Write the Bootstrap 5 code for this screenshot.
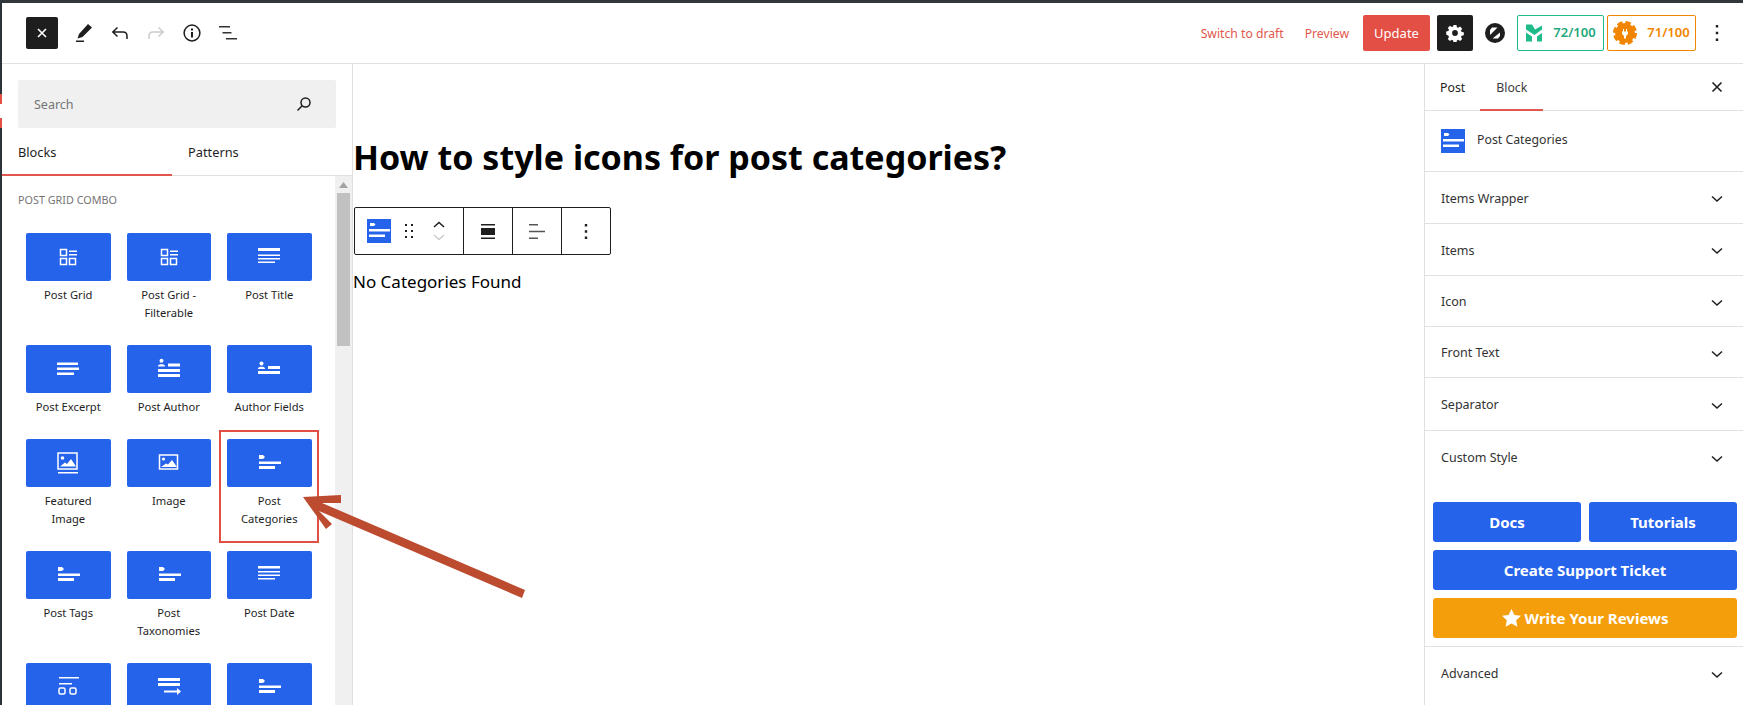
<!DOCTYPE html>
<html lang="en">
<head>
    <meta charset="UTF-8">
    <meta name="viewport" content="width=device-width, initial-scale=1.0">
    <title>Edit Post</title>
    <link href="https://cdn.jsdelivr.net/npm/bootstrap@5.3.0/dist/css/bootstrap.min.css" rel="stylesheet">
    <style>
        html, body { height: 100%; }
        body {
            overflow: hidden;
            background: #fff;
            color: #1e1e1e;
            font-family: "Noto Sans", "Open Sans", sans-serif;
            font-size: 12.5px;
        }
        .ed-frame { height: 705px; position: relative; overflow: hidden; }
        .ed-strip { height: 3px; background: #32373c; }
        .ed-wrap { height: 702px; }
        .ed-rail { width: 2px; background: #2c3338; flex: none; padding-top: 91px; }
        .ed-rail i { display: block; height: 34px; background: linear-gradient(#e34f45 0 10px, #fff 10px 24px, #e34f45 24px); }
        .ed-app { min-width: 0; }

        .ed-top { height: 61px; border-bottom: 1px solid #e0e0e0; padding-left: 24px; }
        .ed-close { width: 32px; height: 32px; background: #1e1e1e; border-radius: 2px; margin-right: 8px; }
        .ed-tool { width: 36px; height: 36px; }
        .ed-link { color: #e2574c; font-size: 12.2px; padding-top: 2px; }
        .ed-draft { margin-right: 21px; }
        .ed-update { width: 67px; height: 36px; background: #e34f45; color: #fff; border-radius: 2px; font-size: 13px; margin-left: 14px; padding-top: 2px; }
        .ed-gear { width: 36px; height: 36px; background: #1e1e1e; border-radius: 2px; margin-left: 7px; margin-right: 12px; }
        .ed-score { height: 36px; border-radius: 2px; font-weight: 600; font-size: 13px; gap: 10px; }
        .ed-score-g { width: 87px; border: 1px solid #1fbb8a; color: #1fa87d; margin-left: 12px; }
        .ed-score-o { width: 89px; border: 1px solid #f18500; color: #f18500; margin-left: 3px; }
        .ed-more { margin: 0 24px 0 19px; }

        .ed-left { width: 351px; flex: none; border-right: 1px solid #e0e0e0; }
        .ed-search { margin: 16px 16px 0; width: 318px; height: 48px; background: #f0f0f0; border-radius: 2px; padding: 3px 16px 0; color: #757575; }
        .ed-search svg { margin-top: -3px; }
        .ed-tabs { height: 48px; border-bottom: 1px solid #e0e0e0; }
        .ed-tab { width: 170px; padding-left: 16px; height: 48px; line-height: 49px; color: #1e1e1e; font-size: 12.8px; }
        .ed-tab-on { box-shadow: inset 0 -2px 0 #e2574c; }
        .ed-list { min-height: 0; overflow: hidden; }
        .ed-scroll { width: 17px; background: #f0f0f0; flex: none; }
        .ed-scroll-up { height: 17px; }
        .ed-thumb { width: 13px; height: 153px; margin: 0 auto; background: #c1c1c1; }
        .ed-cat { font-size: 10.8px; color: #757575; text-transform: uppercase; padding: 16px 0 0 16px; height: 57px; line-height: 16px; }
        .ed-blocks { display: grid; grid-template-columns: repeat(3, 100.5px); padding-left: 16px; }
        .ed-block { padding: 0 8px 23px; text-align: center; font-size: 11.2px; line-height: 18px; color: #1e1e1e; }
        .ed-icon { height: 48px; background: #2563eb; border-radius: 2px; margin-bottom: 5px; }

        .ed-main { min-width: 0; position: relative; }
        .ed-title { font-size: 34px; font-weight: 700; line-height: 1.3; margin: 0; padding: 71px 0 0; color: #000; font-family: "Noto Sans", sans-serif; }
        .ed-bar { width: 257px; height: 48px; border: 1px solid #1e1e1e; border-radius: 2px; margin: 28px 0 0 1px; background: #fff; }
        .ed-bar > div { height: 46px; border-right: 1px solid #1e1e1e; }
        .ed-bar > div:last-child { border-right: 0; }
        .ed-bar-first { width: 109px; padding-left: 12px; }
        .ed-bar-cell { width: 49px; }
        .ed-drag { margin-left: 14px; }
        .ed-move { margin-left: 20px; }
        .ed-none { font-size: 17px; line-height: 27px; margin: 13px 0 0; color: #000; }

        .ed-right { width: 319px; flex: none; border-left: 1px solid #e0e0e0; }
        .ed-rtabs { height: 47px; border-bottom: 1px solid #e0e0e0; padding-right: 20px; }
        .ed-rtab { height: 47px; line-height: 48px; padding: 0 15px; color: #1e1e1e; font-size: 12.3px; }
        .ed-rtab-on { color: #3c3c3c; box-shadow: inset 0 -2px 0 #e2574c; padding: 0 16px; }
        .ed-head { height: 61px; border-bottom: 1px solid #e0e0e0; padding-left: 16px; gap: 12px; color: #333; font-size: 12.3px; }
        .ed-head span { margin-top: -2px; }
        .ed-sec { border-bottom: 1px solid #e0e0e0; padding: 3px 18px 0 16px; color: #333; }
        .ed-cta { padding: 19px 6px 8px 8px; border-bottom: 1px solid #e0e0e0; }
        .ed-cta a { display: flex; align-items: center; justify-content: center; height: 40px; border-radius: 3px; background: #2563eb; color: #fff; font-weight: 700; font-size: 15px; text-decoration: none; gap: 4px; }
        .ed-cta a.ed-star { background: #f59e0b; }

        .ed-over { position: absolute; left: 0; top: 0; pointer-events: none; }
    </style>
</head>
<body>

<svg width="0" height="0" class="position-absolute">
    <defs>
        <symbol id="i-grid" viewBox="0 0 24 24"><g fill="none" stroke="#fff" stroke-width="1.5"><rect x="4.5" y="4.5" width="6" height="6"/><rect x="4.5" y="13.5" width="6" height="6"/><rect x="13.5" y="13.5" width="6" height="6"/></g><path d="M13 5.5h8v1.5h-8zM13 9h8v1.5h-8z" fill="#fff"/></symbol>
        <symbol id="i-title" viewBox="0 0 24 24"><path d="M1 3h22v3H1zM1 9.500h22v1.500H1zM1 13h22v1.500H1zM1 16.500h17V18H1z" fill="#fff"/></symbol>
        <symbol id="i-excerpt" viewBox="0 0 24 24"><path d="M1 5.500h21V8H1zM1 10.500h22V13H1zM1 15.500h17V18H1z" fill="#fff"/></symbol>
        <symbol id="i-author" viewBox="0 0 24 24"><circle cx="4.500" cy="3.800" r="2" fill="#fff"/><path d="M1 9c0-2.500 7-2.500 7 0v.5H1zM11 6.500h12V9.500H11zM1 12h22v3H1zM1 17h22v3H1z" fill="#fff"/></symbol>
        <symbol id="i-fields" viewBox="0 0 24 24"><circle cx="4.500" cy="6.500" r="2" fill="#fff"/><path d="M1 11.500c0-2.500 7-2.500 7 0V12H1zM11 9h12v3H11zM1 14h22v3H1z" fill="#fff"/></symbol>
        <symbol id="i-cats" viewBox="0 0 24 24"><path d="M2 4h4l2 2-2 2H2zM2 10.500h22V13H2zM2 15h16v3H2z" fill="#fff"/></symbol>
        <symbol id="i-feat" viewBox="0 0 24 24"><rect x="2" y="2" width="19" height="16" fill="none" stroke="#fff" stroke-width="1.500"/><path d="M2 21h20v1.500H2z" fill="#fff"/><circle cx="6.500" cy="7" r="1.800" fill="#fff"/><path d="M4 15.500l5-4 2 1.500 4-5 5 7.500z" fill="#fff"/></symbol>
        <symbol id="i-img" viewBox="0 0 24 24"><rect x="2.500" y="4" width="18" height="14" fill="none" stroke="#fff" stroke-width="1.500"/><circle cx="6.500" cy="8" r="1.600" fill="#fff"/><path d="M4 16l5-3.500 2 1 4-4.500 5 7z" fill="#fff"/></symbol>
        <symbol id="i-date" viewBox="0 0 24 24"><path d="M1 3h22v2.500H1zM1 8h22v1.500H1zM1 11.500h22V13H1zM1 15h17v1.500H1z" fill="#fff"/></symbol>
        <symbol id="i-terms" viewBox="0 0 24 24"><path d="M3 2h20v1.500H3zM3 8h13v1.500H3z" fill="#fff"/><rect x="3" y="13" width="6" height="6" rx="1.500" fill="none" stroke="#fff" stroke-width="1.500"/><rect x="14" y="13" width="6" height="6" rx="1.500" fill="none" stroke="#fff" stroke-width="1.500"/></symbol>
        <symbol id="i-arrow" viewBox="0 0 24 24"><path d="M1 3h22v3H1zM1 8h22v3H1zM7 15.500h13V13l4 3.500-4 3.500v-2.500H7z" fill="#fff"/></symbol>
        <symbol id="i-chev" viewBox="0 0 16 16"><path d="M3 5.500l5 4.500 5-4.500" fill="none" stroke="#1e1e1e" stroke-width="1.500"/></symbol>
        <symbol id="i-cat-blue" viewBox="0 0 24 24"><rect width="24" height="24" fill="#2563eb"/><path d="M3 4h4l1.500 1.500L7 7H3zM2 10h21v2.500H2zM2 15.500h16V18H2z" fill="#fff"/></symbol>
    </defs>
</svg>

<div class="ed-frame">
    <div class="ed-strip"></div>
    <div class="ed-wrap d-flex">
        <div class="ed-rail"><i></i></div>
        <div class="ed-app flex-grow-1 d-flex flex-column">

            <header class="ed-top d-flex align-items-center flex-shrink-0">
                <div class="ed-close d-flex align-items-center justify-content-center">
                    <svg width="12" height="12" viewBox="0 0 12 12"><path d="M2 2l8 8M10 2l-8 8" stroke="#fff" stroke-width="1.600"/></svg>
                </div>
                <div class="ed-tool d-flex align-items-center justify-content-center">
                    <svg width="18" height="20" viewBox="0 0 18 20"><path d="M13 1l4 3.500L7.500 14 2.500 15.500 4 11zM1 17.500h8V19H1z" fill="#1e1e1e"/></svg>
                </div>
                <div class="ed-tool d-flex align-items-center justify-content-center">
                    <svg width="18" height="14" viewBox="0 0 18 14"><path d="M6.500 1.500L1.800 6l4.700 4.500M2 6h10c2.500 0 4 1.500 4 4v3" fill="none" stroke="#1e1e1e" stroke-width="1.500"/></svg>
                </div>
                <div class="ed-tool d-flex align-items-center justify-content-center">
                    <svg width="18" height="14" viewBox="0 0 18 14"><path d="M11.500 1.500L16.200 6l-4.700 4.500M16 6H6C3.500 6 2 7.500 2 10v3" fill="none" stroke="#ccc" stroke-width="1.500"/></svg>
                </div>
                <div class="ed-tool d-flex align-items-center justify-content-center">
                    <svg width="18" height="18" viewBox="0 0 18 18"><circle cx="9" cy="9" r="7.900" fill="none" stroke="#1e1e1e" stroke-width="1.500"/><path d="M8 8h2v5.500H8zM8 4.500h2v2H8z" fill="#1e1e1e"/></svg>
                </div>
                <div class="ed-tool d-flex align-items-center justify-content-center">
                    <svg width="18" height="14" viewBox="0 0 18 14"><path d="M0 0h11v1.500H0zM3.500 6h9v1.500h-9zM7 12h11v1.500H7z" fill="#333"/></svg>
                </div>

                <div class="ms-auto d-flex align-items-center">
                    <span class="ed-link ed-draft">Switch to draft</span>
                    <span class="ed-link">Preview</span>
                    <span class="ed-update d-flex align-items-center justify-content-center">Update</span>
                    <span class="ed-gear d-flex align-items-center justify-content-center">
                        <svg width="18" height="18" viewBox="0 0 18 18"><path d="M7.500 1h3l.4 2.200 1.300.6 1.900-1.200 2.100 2.100-1.200 1.900.6 1.300 2.200.4v3l-2.200.4-.6 1.300 1.200 1.900-2.100 2.100-1.900-1.200-1.300.6-.4 2.200h-3l-.4-2.200-1.300-.6-1.900 1.200-2.100-2.100 1.200-1.900-.6-1.300L.2 10.500v-3l2.200-.4.6-1.300-1.200-1.900 2.100-2.100 1.900 1.200 1.300-.6z" fill="#fff"/><circle cx="9" cy="9" r="2.900" fill="#1e1e1e"/></svg>
                    </span>
                    <svg width="20" height="20" viewBox="0 0 20 20"><circle cx="10" cy="10" r="10" fill="#1e1e1e"/><path d="M5 7l2-2.500h5.500L5 12zM15 9.500V13l-2 2.500H7.500z" fill="#fff"/></svg>
                    <span class="ed-score ed-score-g d-flex align-items-center justify-content-center">
                        <svg width="18" height="18" viewBox="0 0 18 18"><path d="M1 .500h6l3 5L17 1.500v4L9.500 11 1 5.500zM1 8.500l6 4V17.500H1zM12 12.500l5-3.500v8.500h-5z" fill="#1fbb8a"/></svg>
                        72/100
                    </span>
                    <span class="ed-score ed-score-o d-flex align-items-center justify-content-center">
                        <svg width="24" height="24" viewBox="0 0 24 24"><circle cx="12" cy="12" r="10" fill="#f18500"/><circle cx="12" cy="12" r="10.500" fill="none" stroke="#f18500" stroke-width="3" stroke-dasharray="5.500 2.750"/><path d="M10 8h1v2.500h2V8h1v2.500h1V13l-2 2v2.500h-2V15l-2-2v-2.500h1z" fill="#fff"/></svg>
                        71/100
                    </span>
                    <svg class="ed-more" width="4" height="16" viewBox="0 0 4 16"><path d="M.8 0h2.400v2.400H.8zM.8 6.800h2.400v2.400H.8zM.8 13.600h2.400V16H.8z" fill="#1e1e1e"/></svg>
                </div>
            </header>

            <div class="d-flex flex-grow-1 overflow-hidden">
                <aside class="ed-left d-flex flex-column">
                    <div class="ed-search d-flex align-items-center justify-content-between flex-shrink-0">
                        <span>Search</span>
                        <svg class="me-2" width="16" height="16" viewBox="0 0 16 16"><circle cx="9.500" cy="6.500" r="4.500" fill="none" stroke="#1e1e1e" stroke-width="1.500"/><path d="M6.200 9.800L1.500 14.500" stroke="#1e1e1e" stroke-width="1.500"/></svg>
                    </div>
                    <div class="ed-tabs d-flex flex-shrink-0">
                        <div class="ed-tab ed-tab-on">Blocks</div>
                        <div class="ed-tab">Patterns</div>
                    </div>
                    <div class="d-flex flex-grow-1 ed-list">
                        <div class="flex-grow-1">
                            <div class="ed-cat">Post Grid Combo</div>
                            <div class="ed-blocks">
                                <div class="ed-block"><div class="ed-icon d-flex align-items-center justify-content-center"><svg width="24" height="24"><use href="#i-grid"/></svg></div>Post Grid</div>
                                <div class="ed-block"><div class="ed-icon d-flex align-items-center justify-content-center"><svg width="24" height="24"><use href="#i-grid"/></svg></div>Post Grid - Filterable</div>
                                <div class="ed-block"><div class="ed-icon d-flex align-items-center justify-content-center"><svg width="24" height="24"><use href="#i-title"/></svg></div>Post Title</div>
                                <div class="ed-block"><div class="ed-icon d-flex align-items-center justify-content-center"><svg width="24" height="24"><use href="#i-excerpt"/></svg></div>Post Excerpt</div>
                                <div class="ed-block"><div class="ed-icon d-flex align-items-center justify-content-center"><svg width="24" height="24"><use href="#i-author"/></svg></div>Post Author</div>
                                <div class="ed-block"><div class="ed-icon d-flex align-items-center justify-content-center"><svg width="24" height="24"><use href="#i-fields"/></svg></div>Author Fields</div>
                                <div class="ed-block"><div class="ed-icon d-flex align-items-center justify-content-center"><svg width="24" height="24"><use href="#i-feat"/></svg></div>Featured<br>Image</div>
                                <div class="ed-block"><div class="ed-icon d-flex align-items-center justify-content-center"><svg width="24" height="24"><use href="#i-img"/></svg></div>Image</div>
                                <div class="ed-block"><div class="ed-icon d-flex align-items-center justify-content-center"><svg width="24" height="24"><use href="#i-cats"/></svg></div>Post<br>Categories</div>
                                <div class="ed-block"><div class="ed-icon d-flex align-items-center justify-content-center"><svg width="24" height="24"><use href="#i-cats"/></svg></div>Post Tags</div>
                                <div class="ed-block"><div class="ed-icon d-flex align-items-center justify-content-center"><svg width="24" height="24"><use href="#i-cats"/></svg></div>Post<br>Taxonomies</div>
                                <div class="ed-block"><div class="ed-icon d-flex align-items-center justify-content-center"><svg width="24" height="24"><use href="#i-date"/></svg></div>Post Date</div>
                                <div class="ed-block"><div class="ed-icon d-flex align-items-center justify-content-center"><svg width="24" height="24"><use href="#i-terms"/></svg></div></div>
                                <div class="ed-block"><div class="ed-icon d-flex align-items-center justify-content-center"><svg width="24" height="24"><use href="#i-arrow"/></svg></div></div>
                                <div class="ed-block"><div class="ed-icon d-flex align-items-center justify-content-center"><svg width="24" height="24"><use href="#i-cats"/></svg></div></div>
                            </div>
                        </div>
                        <div class="ed-scroll">
                            <div class="ed-scroll-up d-flex align-items-center justify-content-center">
                                <svg width="9" height="6" viewBox="0 0 9 6"><path d="M4.500 0L9 6H0z" fill="#a3a3a3"/></svg>
                            </div>
                            <div class="ed-thumb"></div>
                        </div>
                    </div>
                </aside>

                <main class="ed-main flex-grow-1">
                    <h1 class="ed-title">How to style icons for post categories?</h1>
                    <div class="ed-bar d-flex">
                        <div class="ed-bar-first d-flex align-items-center">
                            <svg width="24" height="24"><use href="#i-cat-blue"/></svg>
                            <svg class="ed-drag" width="8" height="14" viewBox="0 0 8 14"><path d="M0 0h2v2H0zM6 0h2v2H6zM0 6h2v2H0zM6 6h2v2H6zM0 12h2v2H0zM6 12h2v2H6z" fill="#1e1e1e"/></svg>
                            <svg class="ed-move" width="12" height="20" viewBox="0 0 12 20"><path d="M1 6l5-4.500L11 6" fill="none" stroke="#1e1e1e" stroke-width="1.500"/><path d="M1 14l5 4.500L11 14" fill="none" stroke="#ccc" stroke-width="1.500"/></svg>
                        </div>
                        <div class="ed-bar-cell d-flex align-items-center justify-content-center">
                            <svg width="14" height="15" viewBox="0 0 14 15"><path d="M0 0h14v1.500H0zM0 4h14v7H0zM0 13.500h14V15H0z" fill="#1e1e1e"/></svg>
                        </div>
                        <div class="ed-bar-cell d-flex align-items-center justify-content-center">
                            <svg width="16" height="15" viewBox="0 0 16 15"><path d="M0 0h9v1.500H0zM0 6.800h16v1.500H0zM0 13.500h9V15H0z" fill="#555"/></svg>
                        </div>
                        <div class="d-flex align-items-center justify-content-center flex-grow-1">
                            <svg width="4" height="15" viewBox="0 0 4 15"><path d="M.8 0h2.400v2.400H.8zM.8 6.300h2.400v2.400H.8zM.8 12.600h2.400V15H.8z" fill="#1e1e1e"/></svg>
                        </div>
                    </div>
                    <p class="ed-none">No Categories Found</p>
                </main>

                <aside class="ed-right d-flex flex-column">
                    <div class="ed-rtabs d-flex align-items-center">
                        <div class="ed-rtab">Post</div>
                        <div class="ed-rtab ed-rtab-on">Block</div>
                        <svg class="ms-auto" width="12" height="12" viewBox="0 0 12 12"><path d="M1.500 1.500l9 9M10.500 1.500l-9 9" stroke="#1e1e1e" stroke-width="1.600"/></svg>
                    </div>
                    <div class="ed-head d-flex align-items-center">
                        <svg width="24" height="24"><use href="#i-cat-blue"/></svg>
                        <span>Post Categories</span>
                    </div>
                    <div class="ed-sec d-flex align-items-center justify-content-between" style="height:52px">Items Wrapper<svg width="16" height="16"><use href="#i-chev"/></svg></div>
                    <div class="ed-sec d-flex align-items-center justify-content-between" style="height:52px">Items<svg width="16" height="16"><use href="#i-chev"/></svg></div>
                    <div class="ed-sec d-flex align-items-center justify-content-between" style="height:51px">Icon<svg width="16" height="16"><use href="#i-chev"/></svg></div>
                    <div class="ed-sec d-flex align-items-center justify-content-between" style="height:51px">Front Text<svg width="16" height="16"><use href="#i-chev"/></svg></div>
                    <div class="ed-sec d-flex align-items-center justify-content-between" style="height:53px">Separator<svg width="16" height="16"><use href="#i-chev"/></svg></div>
                    <div class="ed-sec border-0 d-flex align-items-center justify-content-between" style="height:52px">Custom Style<svg width="16" height="16"><use href="#i-chev"/></svg></div>
                    <div class="ed-cta">
                        <div class="d-flex gap-2 mb-2">
                            <a href="#" class="w-50">Docs</a>
                            <a href="#" class="w-50">Tutorials</a>
                        </div>
                        <a href="#" class="mb-2">Create Support Ticket</a>
                        <a href="#" class="ed-star">
                            <svg width="19" height="18" viewBox="0 0 19 18"><path d="M9.500 0l2.900 6 6.600.8-4.800 4.500 1.200 6.500-5.900-3.200-5.900 3.200 1.200-6.500L0 6.800 6.600 6z" fill="#fff"/></svg>
                            Write Your Reviews
                        </a>
                    </div>
                    <div class="ed-sec border-0 d-flex align-items-center justify-content-between" style="height:52px">Advanced<svg width="16" height="16"><use href="#i-chev"/></svg></div>
                </aside>
            </div>
        </div>
    </div>

    <svg class="ed-over" width="1743" height="705" viewBox="0 0 1743 705">
        <rect x="220" y="431" width="98" height="111" fill="none" stroke="#e34f45" stroke-width="2"/>
        <path d="M303 497L341 495L341 503L322 503L525 590L522 598L319 511L332 524L326 529Z" fill="#bc4b2f"/>
    </svg>
</div>

</body>
</html>
